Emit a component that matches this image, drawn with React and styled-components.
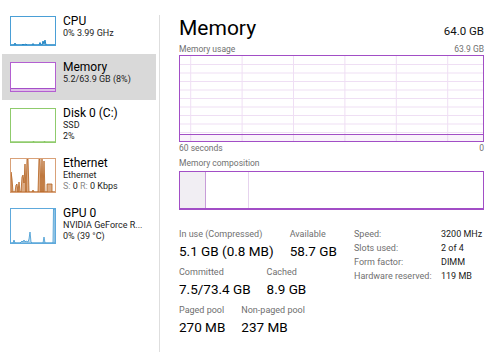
import React from 'react';
import styled, { createGlobalStyle } from 'styled-components';

const Global = createGlobalStyle`
  html, body { margin: 0; padding: 0; background: #fff; }
  body { font-family: Roboto, "Open Sans", sans-serif; color: #000; }
`;

const Window = styled.div`
  display: flex;
  width: 500px;
  height: 352px;
  overflow: hidden;
  background: #fff;
`;

const Sidebar = styled.div`
  width: 159px;
  flex: none;
  padding-top: 8px;
  box-sizing: border-box;
  display: flex;
  flex-direction: column;
`;

const Divider = styled.div`
  width: 1px;
  flex: none;
  margin-top: 15px;
  background: #dedede;
`;

const Row = styled.div`
  display: flex;
  align-items: flex-start;
  gap: 7px;
  margin-left: 2px;
  width: 154px;
  height: ${(p) => p.$h}px;
  padding-left: 8px;
  box-sizing: border-box;
  background: ${(p) => (p.$active ? '#d9d9d9' : 'transparent')};
`;

const Thumb = styled.div`
  flex: none;
  width: 46px;
  height: ${(p) => p.$h}px;
  margin-top: 8px;
  border: 1px solid ${(p) => p.$c};
  box-sizing: border-box;
  background: #fff;
  svg { display: block; }
`;

const RowText = styled.div`
  padding-top: 6px;
  display: flex;
  flex-direction: column;
  white-space: nowrap;
`;

const RowTitle = styled.div`
  font-size: 12px;
  line-height: 14px;
  color: #000;
`;

const RowSub = styled.div`
  font-size: 9px;
  line-height: 11px;
  color: #1c1c1c;
`;

const Dim = styled.span`
  color: #8a8a8a;
`;

const Main = styled.div`
  flex: 1;
  padding: 15px 16px 0 19px;
  display: flex;
  flex-direction: column;
  min-width: 0;
`;

const Header = styled.div`
  display: flex;
  justify-content: space-between;
  align-items: baseline;
`;

const Title = styled.div`
  font-size: 21px;
  line-height: 26px;
`;

const Total = styled.div`
  font-size: 11.5px;
  color: #111;
`;

const Caption = styled.div`
  display: flex;
  justify-content: space-between;
  font-size: 8.5px;
  line-height: 10px;
  color: #6f6f6f;
  margin-top: ${(p) => p.$mt}px;
`;

const Graph = styled.div`
  margin-top: 1px;
  height: 87px;
  border: 1px solid #a24ec6;
  box-sizing: border-box;
  svg { display: block; }
`;

const Composition = styled.div`
  margin-top: 3px;
  height: 39px;
  display: flex;
  border: 1px solid #a24ec6;
  border-bottom-width: 2px;
  box-sizing: border-box;
`;

const Segment = styled.div`
  flex: ${(p) => (p.$w ? `0 0 ${p.$w}px` : '1')};
  box-sizing: border-box;
  background: ${(p) => p.$bg || '#fff'};
  border-right: ${(p) => (p.$line ? `1px solid ${p.$line}` : 'none')};
`;

const Stats = styled.div`
  margin-top: 19px;
  display: flex;
  align-items: flex-start;
`;

const StatBlock = styled.div`
  flex: 0 0 175px;
  display: flex;
  flex-direction: column;
  gap: 5px;
`;

const StatRow = styled.div`
  display: flex;
  gap: 16px;
`;

const Stat = styled.div`
  display: flex;
  flex-direction: column;
  white-space: nowrap;
`;

const StatLabel = styled.div`
  font-size: 9px;
  line-height: 11px;
  color: #6f6f6f;
`;

const StatValue = styled.div`
  font-size: 13.5px;
  line-height: 22px;
  color: #000;
`;

const Details = styled.div`
  margin-top: -2px;
  display: grid;
  grid-template-columns: 87px auto;
  font-size: 9px;
  line-height: 14px;
  white-space: nowrap;
`;

const DLabel = styled.div`
  color: #6f6f6f;
`;

const DValue = styled.div`
  color: #1a1a1a;
`;

const CpuSpark = () => (
  <svg width="44" height="28" viewBox="0 0 44 28">
    <path
      d="M0,28 L3,28 L4,26 L5,28 L11,28 L12,27 L13,28 L15,27 L16,28 L21,28 L22,26.5 L23,28 L28,28 L29,25.5 L30,28 L31,28 L32,24 L33,27 L34,23 L35,28 L44,28 Z"
      fill="rgba(17,125,187,0.25)"
      stroke="#1f84c4"
      strokeWidth="1"
    />
  </svg>
);

const MemSpark = () => (
  <svg width="44" height="28" viewBox="0 0 44 28">
    <rect x="0" y="25" width="44" height="3" fill="rgba(139,18,174,0.28)" />
    <line x1="0" y1="25.5" x2="44" y2="25.5" stroke="#a44fc8" strokeWidth="1" />
  </svg>
);

const DiskSpark = () => (
  <svg width="44" height="33" viewBox="0 0 44 33">
    <path d="M0,33 L22,33 L22.5,32 L23,33 L33,33 L33.5,32 L34,33 L44,33 Z" fill="rgba(77,166,12,0.3)" stroke="#7fc255" strokeWidth="0.8" />
  </svg>
);

const EthSpark = () => (
  <svg width="44" height="33" viewBox="0 0 44 33">
    <path
      d="M0,33 L0,13 L1,20 L2,33 L4,33 L5,26 L6,25 L7,33 L8,23 L9,33 L10,33 L11,18 L12,16 L13,24 L14,5 L15,33 L16,0 L17,0 L18,33 L21,33 L22,31 L23,33 L27,33 L28,0 L29,0 L30,33 L31,0 L32,33 L33,2 L34,33 L36,33 L36,25 L41,25 L41,33 L44,33 Z"
      fill="rgba(190,100,30,0.55)"
      stroke="#b3601c"
      strokeWidth="0.8"
    />
  </svg>
);

const GpuSpark = () => (
  <svg width="44" height="34" viewBox="0 0 44 34">
    <path
      d="M0,34 L2,34 L3,31 L4,34 L9,34 L10,33 L11,32 L12,33 L13,31 L14,33 L15,32 L17,33 L18,30 L19,23 L20,33 L21,34 L32,34 L33,28 L34,34 L42,34 L42.5,0 L44,0 L44,34 Z"
      fill="rgba(17,125,187,0.25)"
      stroke="#3c97d2"
      strokeWidth="0.8"
    />
  </svg>
);

const UsageGraph = () => {
  const w = 303;
  const h = 85;
  const vx = [0, 1, 2, 3, 4, 5].map((k) => 10.7 + 51.4 * k);
  const hy = [1, 2, 3, 4, 5, 6, 7, 8, 9].map((k) => (h / 10) * k);
  return (
    <svg width={w} height={h} viewBox={`0 0 ${w} ${h}`}>
      {vx.map((x) => (
        <line key={`v${x}`} x1={x} y1="0" x2={x} y2={h} stroke="#efdff4" strokeWidth="1" />
      ))}
      {hy.map((y) => (
        <line key={`h${y}`} x1="0" y1={y} x2={w} y2={y} stroke="#efdff4" strokeWidth="1" />
      ))}
      <rect x="0" y="78.5" width={w} height={h - 78.5} fill="rgba(139,18,174,0.05)" />
      <line x1="0" y1="78.5" x2={w} y2="78.5" stroke="#a24ec6" strokeWidth="1" />
    </svg>
  );
};

const sidebarItems = [
  { key: 'cpu', h: 46, th: 30, c: '#4a9fd6', title: 'CPU', spark: <CpuSpark />, lines: ['0%  3.99 GHz'] },
  { key: 'mem', h: 46, th: 30, c: '#b35fd1', title: 'Memory', spark: <MemSpark />, lines: ['5.2/63.9 GB (8%)'], active: true },
  { key: 'disk', h: 50, th: 35, c: '#8fcb6c', title: 'Disk 0 (C:)', spark: <DiskSpark />, lines: ['SSD', '2%'] },
  {
    key: 'eth', h: 50, th: 35, c: '#d9a178', title: 'Ethernet', spark: <EthSpark />,
    lines: ['Ethernet', (<><Dim>S:</Dim> 0 <Dim>R:</Dim> 0 Kbps</>)],
  },
  { key: 'gpu', h: 50, th: 36, c: '#5ea9dc', title: 'GPU 0', spark: <GpuSpark />, lines: ['NVIDIA GeForce R...', '0%  (39 °C)'] },
];

const statRows = [
  [
    ['In use (Compressed)', '5.1 GB (0.8 MB)'],
    ['Available', '58.7 GB'],
  ],
  [
    ['Committed', '7.5/73.4 GB'],
    ['Cached', '8.9 GB'],
  ],
  [
    ['Paged pool', '270 MB'],
    ['Non-paged pool', '237 MB'],
  ],
];

const details = [
  ['Speed:', '3200 MHz'],
  ['Slots used:', '2 of 4'],
  ['Form factor:', 'DIMM'],
  ['Hardware reserved:', '119 MB'],
];

export default function App() {
  return (
    <>
      <Global />
      <Window>
        <Sidebar>
          {sidebarItems.map((it) => (
            <Row key={it.key} $h={it.h} $active={it.active}>
              <Thumb $h={it.th} $c={it.c}>{it.spark}</Thumb>
              <RowText>
                <RowTitle>{it.title}</RowTitle>
                {it.lines.map((l, i) => (
                  <RowSub key={i}>{l}</RowSub>
                ))}
              </RowText>
            </Row>
          ))}
        </Sidebar>
        <Divider />
        <Main>
          <Header>
            <Title>Memory</Title>
            <Total>64.0 GB</Total>
          </Header>
          <Caption $mt={3}>
            <span>Memory usage</span>
            <span>63.9 GB</span>
          </Caption>
          <Graph>
            <UsageGraph />
          </Graph>
          <Caption $mt={1}>
            <span>60 seconds</span>
            <span>0</span>
          </Caption>
          <Caption $mt={5}>
            <span>Memory composition</span>
          </Caption>
          <Composition>
            <Segment $w={26} $bg="#f1eef3" $line="#c79cd8" />
            <Segment $w={43} $line="#e6d3ee" />
            <Segment />
          </Composition>
          <Stats>
            <StatBlock>
              {statRows.map((r, i) => (
                <StatRow key={i}>
                  {r.map(([l, v]) => (
                    <Stat key={l}>
                      <StatLabel>{l}</StatLabel>
                      <StatValue>{v}</StatValue>
                    </Stat>
                  ))}
                </StatRow>
              ))}
            </StatBlock>
            <Details>
              {details.map(([l, v]) => (
                <React.Fragment key={l}>
                  <DLabel>{l}</DLabel>
                  <DValue>{v}</DValue>
                </React.Fragment>
              ))}
            </Details>
          </Stats>
        </Main>
      </Window>
    </>
  );
}
